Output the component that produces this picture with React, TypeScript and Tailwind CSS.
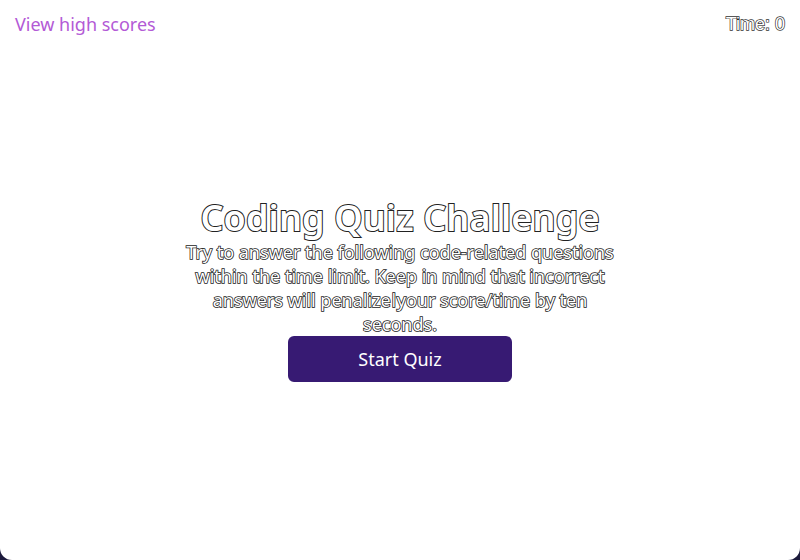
export default function App() {
  return (
    <div className="h-[560px] w-[800px] bg-[#1c1a3c]">
      <div
        className="flex h-[560px] flex-col rounded-b-[12px] bg-white"
        style={{ fontFamily: '"Noto Sans", sans-serif' }}
      >
        <header className="flex items-start justify-between px-[15px] pt-[10px]">
          <a className="text-[18px] leading-[28px] text-[#b35ad6]">View high scores</a>
          <div
            className="text-[18px] leading-[28px] text-white [-webkit-text-stroke:1.4px_#333] [paint-order:stroke_fill]"
            style={{ fontFamily: '"Liberation Sans", Arial, sans-serif' }}
          >
            Time: 0
          </div>
        </header>
        <main className="flex flex-col items-center pt-[158px]">
          <h1 className="text-[36px] font-semibold leading-[44px] tracking-[0.15px] text-white [-webkit-text-stroke:2px_#222] [paint-order:stroke_fill]">
            Coding Quiz Challenge
          </h1>
          <p className="w-[440px] text-center text-[18px] leading-[24px] text-white [-webkit-text-stroke:1.6px_#222] [paint-order:stroke_fill]">
            Try to answer the following code-related questions within the time limit. Keep in mind that incorrect answers will penalizeǀyour score/time by ten seconds.
          </p>
          <button className="h-[46px] w-[224px] rounded-[6px] bg-[#371a73] text-[18px] text-white">
            Start Quiz
          </button>
        </main>
      </div>
    </div>
  );
}
